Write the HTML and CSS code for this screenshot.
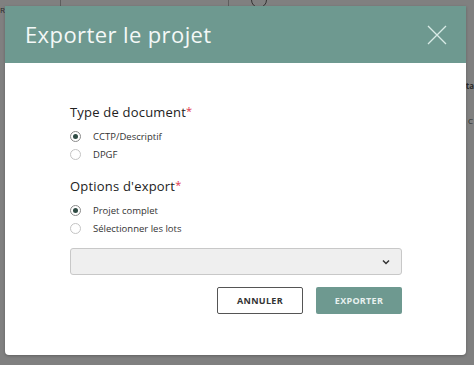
FILE: index.html
```html
<!doctype html>
<html lang="fr">
<head>
  <meta charset="utf-8">
  <title>Exporter le projet</title>
  <link rel="stylesheet" href="styles.css">
</head>
<body>

<div class="backdrop">
  <span class="bg-r">R</span>
  <span class="bg-line l1"></span>
  <span class="bg-line l2"></span>
  <span class="bg-ring"></span>
  <span class="bg-ta">ta</span>
  <span class="bg-c">C</span>
</div>

<div class="modal">
  <div class="modal-head">
    <h1>Exporter le projet</h1>
    <svg class="close" width="20" height="20" viewBox="0 0 20 20">
      <path d="M1 1 L19 19 M19 1 L1 19" stroke="#d9ebe6" stroke-width="1.3" fill="none"/>
    </svg>
  </div>

  <div class="modal-body">
    <div class="group">
      <div class="group-title">Type de document<span class="req">*</span></div>
      <label class="radio"><span class="dot on"></span>CCTP/Descriptif</label>
      <label class="radio"><span class="dot"></span>DPGF</label>
    </div>

    <div class="group">
      <div class="group-title">Options d'export<span class="req">*</span></div>
      <label class="radio"><span class="dot on"></span>Projet complet</label>
      <label class="radio"><span class="dot"></span>Sélectionner les lots</label>
    </div>

    <div class="select">
      <svg width="8" height="6" viewBox="0 0 8 6">
        <path d="M1 1.5 L4 4.5 L7 1.5" stroke="#333" stroke-width="1.5" fill="none"/>
      </svg>
    </div>

    <div class="actions">
      <button class="btn btn-cancel">ANNULER</button>
      <button class="btn btn-ok">EXPORTER</button>
    </div>
  </div>
</div>

</body>
</html>
```

FILE: styles.css
```css
body {
  margin: 0;
  padding: 6px 8px 0 5px;
  background: #808080;
  font-family: "Open Sans", sans-serif;
  height: 365px;
  box-sizing: border-box;
  overflow: hidden;
}

.backdrop {
  position: absolute;
  inset: 0;
  color: #2a2a2a;
  font-size: 10px;
}

.bg-r { position: absolute; left: 0; top: 4px; font-size: 8px; }
.bg-ta { position: absolute; right: 0; top: 80px; font-weight: bold; font-size: 8px; }
.bg-c { position: absolute; right: 1px; top: 115px; font-size: 8px; }
.bg-line { position: absolute; top: 0; width: 1px; height: 8px; background: #5e5e5e; }
.l1 { left: 60px; }
.l2 { left: 228px; }
.bg-ring {
  position: absolute;
  left: 251px;
  top: -8px;
  width: 14px;
  height: 14px;
  border: 1.5px solid #333;
  border-radius: 50%;
}

.modal {
  position: relative;
  width: 461px;
  height: 349px;
  background: #fff;
  border-radius: 0 0 4px 4px;
  box-shadow: 0 1px 3px rgba(0,0,0,0.25);
}

.modal-head {
  height: 57px;
  background: #6e9990;
  display: flex;
  align-items: center;
  justify-content: space-between;
  padding: 0 19px 0 20px;
}

.modal-head h1 {
  margin: 0;
  color: #f4f8f7;
  font-weight: 400;
  font-size: 22px;
  letter-spacing: 0.4px;
  padding-bottom: 2px;
}

.close { margin-top: 1px; }

.modal-body {
  padding: 40px 64px 0 65px;
}

.group + .group { margin-top: 14px; }

.group-title {
  font-size: 13px;
  color: #222;
  margin-bottom: 6px;
  letter-spacing: 0.2px;
}

.req { color: #e0344a; font-size: 11px; vertical-align: top; }

.radio {
  display: flex;
  align-items: center;
  height: 18px;
  font-size: 9.5px;
  color: #333;
}

.dot {
  width: 11px;
  height: 11px;
  border: 1px solid #c4c4c4;
  border-radius: 50%;
  margin: 0 12px 0 0;
  position: relative;
  box-sizing: border-box;
}

.dot.on { border-color: #8a8a8a; }
.dot.on::after {
  content: "";
  position: absolute;
  left: 2px;
  top: 2px;
  width: 5px;
  height: 5px;
  border-radius: 50%;
  background: #2f4b44;
}

.select {
  margin-top: 11px;
  height: 27px;
  background: #efefef;
  border: 1px solid #c8c8c8;
  border-radius: 3px;
  box-sizing: border-box;
  display: flex;
  align-items: center;
  justify-content: flex-end;
  padding-right: 11px;
}

.actions {
  display: flex;
  justify-content: flex-end;
  gap: 13px;
  margin-top: 12px;
}

.btn {
  width: 86px;
  height: 27px;
  border-radius: 2px;
  font-family: "Open Sans", sans-serif;
  font-size: 9px;
  font-weight: 700;
  letter-spacing: 0.3px;
  cursor: pointer;
}

.btn-cancel {
  background: #fff;
  border: 1px solid #555;
  color: #333;
}

.btn-ok {
  background: #6e9990;
  border: none;
  color: #e8f1ef;
}
```
